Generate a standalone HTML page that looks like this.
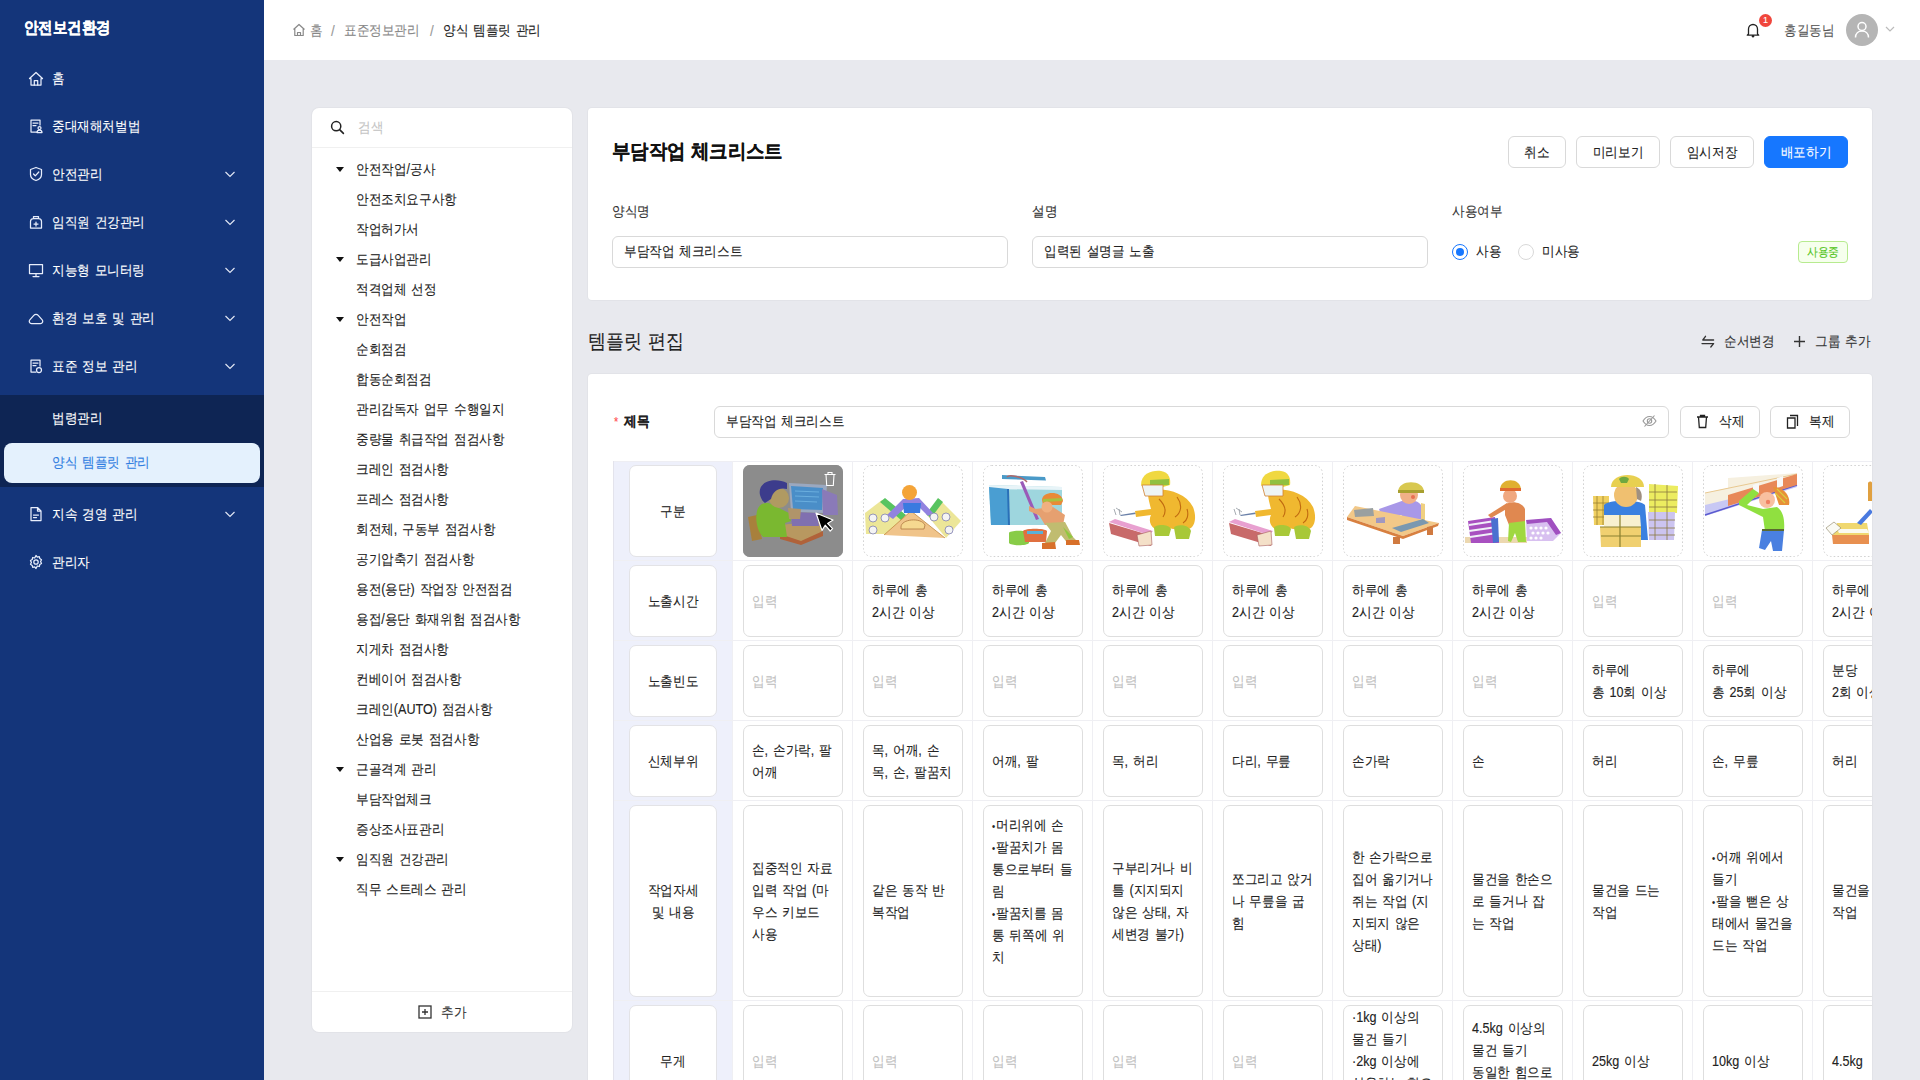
<!DOCTYPE html><html lang="ko"><head><meta charset="utf-8"><title>양식 템플릿 관리</title><style>
*{box-sizing:border-box;margin:0;padding:0}
html,body{width:1920px;height:1080px;overflow:hidden}
body{position:relative;background:#e8e9ee;font-family:"Liberation Sans",sans-serif;color:#222;font-size:14px;letter-spacing:0;word-spacing:1.5px;-webkit-text-stroke:0.12px currentColor}
.abs{position:absolute}
.t{position:absolute;white-space:nowrap;line-height:20px;transform:scaleX(0.9);transform-origin:0 50%}
#sb{position:absolute;left:0;top:0;width:264px;height:1080px;background:#14357a}
.mi{position:absolute;left:0;width:264px;height:48px;color:#fff;font-size:14px}
.mi .ic{position:absolute;left:28px;top:16px;width:16px;height:16px}
.mi .lb{position:absolute;left:52px;top:14px;line-height:20px;white-space:nowrap;transform:scaleX(0.9);transform-origin:0 50%}
.mi .ch{position:absolute;left:224px;top:19px;width:12px;height:10px}
#hd{position:absolute;left:264px;top:0;width:1656px;height:60px;background:#fff}
.panel{position:absolute;background:#fff;border-radius:4px;box-shadow:0 0 0 1px #e2e3e8}
.tr{position:absolute;left:356px;height:20px;line-height:20px;white-space:nowrap;color:#222;font-size:14px;transform:scaleX(0.9);transform-origin:0 50%}
.tri{position:absolute;left:336px;width:0;height:0;border-left:4px solid transparent;border-right:4px solid transparent;border-top:5.5px solid #111}
.inp{position:absolute;height:32px;border:1px solid #d9d9d9;border-radius:6px;background:#fff}
.btn{position:absolute;height:32px;border:1px solid #d9d9d9;border-radius:6px;background:#fff;text-align:center;line-height:30px;color:#222}
.lc{position:absolute;background:#fff;border:1px solid #e3e3e6;border-radius:7px;text-align:center;color:#222}
.cc{position:absolute;background:#fff;border:1px solid #dedede;border-radius:7px;color:#222}
.cc .in{position:absolute;left:7.5px;top:50%;transform:translateY(-50%) scaleX(0.9);transform-origin:0 50%;line-height:22px;white-space:nowrap}
.ph{color:#bfbfbf}
.la{letter-spacing:0}
.k{display:inline-block;transform:scaleX(0.9);transform-origin:50% 50%}
.bl{font-size:10px;margin-right:1px;line-height:0}
.bl2{}
.ic{position:absolute;left:9px;}
.img{position:absolute;border:1px dashed #d4d4d4;border-radius:8px;background:#fff;overflow:hidden}
</style></head><body>
<div id="sb">
<div class="t" style="left:24px;top:18px;color:#fff;font-weight:bold;font-size:16px;line-height:20px;-webkit-text-stroke:0.35px #fff">안전보건환경</div>
<div class="mi" style="top:54px"><svg class="ic" viewBox="0 0 16 16"><path d="M1.5 8.5 8 2.5l6.5 6H13V15H3V8.5z" stroke="#e8eefc" stroke-width="1.25" fill="none" stroke-linecap="round" stroke-linejoin="round"/><path d="M6.3 15v-4.5h3.4V15" stroke="#e8eefc" stroke-width="1.25" fill="none" stroke-linecap="round" stroke-linejoin="round"/></svg><div class="lb">홈</div></div>
<div class="mi" style="top:102px"><svg class="ic" viewBox="0 0 16 16"><path d="M9 14H3V2h9v5M5 5h5M5 7.5h3" stroke="#e8eefc" stroke-width="1.25" fill="none" stroke-linecap="round" stroke-linejoin="round"/><circle cx="11.5" cy="10" r="1.5" stroke="#e8eefc" stroke-width="1.25" fill="none" stroke-linecap="round" stroke-linejoin="round"/><path d="M9 14.5c0-1.5 1-2.3 2.5-2.3s2.5.8 2.5 2.3z" stroke="#e8eefc" stroke-width="1.25" fill="none" stroke-linecap="round" stroke-linejoin="round"/></svg><div class="lb">중대재해처벌법</div></div>
<div class="mi" style="top:150px"><svg class="ic" viewBox="0 0 16 16"><path d="M8 1.5 13.5 3.5v5c0 3-2.5 5-5.5 6-3-1-5.5-3-5.5-6v-5z" stroke="#e8eefc" stroke-width="1.25" fill="none" stroke-linecap="round" stroke-linejoin="round"/><path d="M5.5 8l1.8 1.8L10.8 6" stroke="#e8eefc" stroke-width="1.25" fill="none" stroke-linecap="round" stroke-linejoin="round"/></svg><div class="lb">안전관리</div><svg class="ch" viewBox="0 0 12 10"><path d="M1.5 3l4.5 4.5L10.5 3" stroke="#dfe5f3" stroke-width="1.2" fill="none"/></svg></div>
<div class="mi" style="top:198px"><svg class="ic" viewBox="0 0 16 16"><path d="M5.5 4.5V2.5h5v2M2.5 14V7.5c0-1.7 1.3-3 3-3h5c1.7 0 3 1.3 3 3V14z" stroke="#e8eefc" stroke-width="1.25" fill="none" stroke-linecap="round" stroke-linejoin="round"/><path d="M8 8v4M6 10h4" stroke="#e8eefc" stroke-width="1.25" fill="none" stroke-linecap="round" stroke-linejoin="round"/></svg><div class="lb">임직원 건강관리</div><svg class="ch" viewBox="0 0 12 10"><path d="M1.5 3l4.5 4.5L10.5 3" stroke="#dfe5f3" stroke-width="1.2" fill="none"/></svg></div>
<div class="mi" style="top:246px"><svg class="ic" viewBox="0 0 16 16"><path d="M1.5 2.5h13v9h-13zM8 11.5v2.5M5 14.5h6" stroke="#e8eefc" stroke-width="1.25" fill="none" stroke-linecap="round" stroke-linejoin="round"/></svg><div class="lb">지능형 모니터링</div><svg class="ch" viewBox="0 0 12 10"><path d="M1.5 3l4.5 4.5L10.5 3" stroke="#dfe5f3" stroke-width="1.2" fill="none"/></svg></div>
<div class="mi" style="top:294px"><svg class="ic" viewBox="0 0 16 16"><path d="M3.6 13.6H12.4A2.3 2.3 0 0 0 14.2 9.8L10.2 5.4A3 3 0 0 0 5.8 5.4L1.8 9.8A2.3 2.3 0 0 0 3.6 13.6z" stroke="#e8eefc" stroke-width="1.25" fill="none" stroke-linecap="round" stroke-linejoin="round"/></svg><div class="lb">환경 보호 및 관리</div><svg class="ch" viewBox="0 0 12 10"><path d="M1.5 3l4.5 4.5L10.5 3" stroke="#dfe5f3" stroke-width="1.2" fill="none"/></svg></div>
<div class="mi" style="top:342px"><svg class="ic" viewBox="0 0 16 16"><path d="M8 14H3V2h9v6M5 5h5M5 7.5h3" stroke="#e8eefc" stroke-width="1.25" fill="none" stroke-linecap="round" stroke-linejoin="round"/><circle cx="11" cy="12" r="2.5" stroke="#e8eefc" stroke-width="1.25" fill="none" stroke-linecap="round" stroke-linejoin="round"/></svg><div class="lb">표준 정보 관리</div><svg class="ch" viewBox="0 0 12 10"><path d="M1.5 3l4.5 4.5L10.5 3" stroke="#dfe5f3" stroke-width="1.2" fill="none"/></svg></div>
<div class="abs" style="left:0;top:395px;width:264px;height:92px;background:#0e2554"></div>
<div class="t" style="left:52px;top:408px;color:#fff;font-size:14px">법령관리</div>
<div class="abs" style="left:4px;top:443px;width:256px;height:40px;background:#e4f1fd;border-radius:8px"></div>
<div class="t" style="left:52px;top:452px;color:#2f7de1;font-size:14px">양식 템플릿 관리</div>
<div class="mi" style="top:490px"><svg class="ic" viewBox="0 0 16 16"><path d="M3 1.5h6.5L13 5v9.5H3zM9.5 1.5V5H13M5.5 9h5M5.5 11.5h3" stroke="#e8eefc" stroke-width="1.25" fill="none" stroke-linecap="round" stroke-linejoin="round"/></svg><div class="lb">지속 경영 관리</div><svg class="ch" viewBox="0 0 12 10"><path d="M1.5 3l4.5 4.5L10.5 3" stroke="#dfe5f3" stroke-width="1.2" fill="none"/></svg></div>
<div class="mi" style="top:538px"><svg class="ic" viewBox="0 0 16 16"><circle cx="8" cy="8" r="2.2" stroke="#e8eefc" stroke-width="1.25" fill="none" stroke-linecap="round" stroke-linejoin="round"/><path d="M8 1.5l1.3 1.6 2-.5.5 2 1.7 1.1-.9 1.8.9 1.9-1.7 1.1-.5 2-2-.5L8 14.5l-1.3-1.6-2 .5-.5-2-1.7-1.1.9-1.9-.9-1.8 1.7-1.1.5-2 2 .5z" stroke="#e8eefc" stroke-width="1.25" fill="none" stroke-linecap="round" stroke-linejoin="round"/></svg><div class="lb">관리자</div></div>
</div>
<div id="hd"></div>
<svg class="abs" style="left:292px;top:23px" width="14" height="14" viewBox="0 0 14 14"><path d="M1.5 6.5 7 1.5l5.5 5M2.8 5.5V12.5h8.4V5.5M5.5 12.5V9.5h3v3" stroke="#888" stroke-width="1.2" fill="none" stroke-linejoin="round"/></svg>
<div class="t" style="left:310px;top:20px;color:#888">홈</div>
<div class="t" style="left:331px;top:21px;color:#999;font-size:15px">/</div>
<div class="t" style="left:344px;top:20px;color:#888">표준정보관리</div>
<div class="t" style="left:430px;top:21px;color:#999;font-size:15px">/</div>
<div class="t" style="left:443px;top:20px;color:#222">양식 템플릿 관리</div>
<svg class="abs" style="left:1746px;top:22px" width="14" height="16" viewBox="0 0 14 16"><path d="M2.5 12V7a4.5 4.5 0 0 1 9 0v5l1.2 1.2H1.3z" stroke="#222" stroke-width="1.3" fill="none" stroke-linejoin="round"/><circle cx="7" cy="14.3" r="1.2" fill="#222"/></svg>
<div class="abs" style="left:1759px;top:14px;width:13px;height:13px;border-radius:50%;background:#f0463c;color:#fff;font-size:9px;line-height:13px;text-align:center;letter-spacing:0"><span class="la">1</span></div>
<div class="t" style="left:1784px;top:20px;color:#555">홍길동님</div>
<div class="abs" style="left:1846px;top:14px;width:32px;height:32px;border-radius:50%;background:#b5b5b5"></div>
<svg class="abs" style="left:1846px;top:14px" width="32" height="32" viewBox="0 0 32 32"><circle cx="16" cy="12.5" r="4" stroke="#fff" stroke-width="1.5" fill="none"/><path d="M9.5 23.5c0-4 2.8-6.5 6.5-6.5s6.5 2.5 6.5 6.5" stroke="#fff" stroke-width="1.5" fill="none"/></svg>
<svg class="abs" style="left:1885px;top:25px" width="10" height="8" viewBox="0 0 10 8"><path d="M1 2l4 4 4-4" stroke="#bbb" stroke-width="1.2" fill="none"/></svg>
<div class="panel" style="left:312px;top:108px;width:260px;height:924px;border-radius:7px"></div>
<svg class="abs" style="left:330px;top:120px" width="15" height="15" viewBox="0 0 15 15"><circle cx="6.2" cy="6.2" r="4.6" stroke="#222" stroke-width="1.5" fill="none"/><path d="M9.6 9.6l3.8 3.8" stroke="#222" stroke-width="1.6" stroke-linecap="round"/></svg>
<div class="t" style="left:358px;top:117px;color:#c4c4c4">검색</div>
<div class="abs" style="left:312px;top:147px;width:260px;height:1px;background:#f0f0f0"></div>
<div class="tri" style="top:167px"></div>
<div class="tr" style="top:159px">안전작업/공사</div>
<div class="tr" style="top:189px">안전조치요구사항</div>
<div class="tr" style="top:219px">작업허가서</div>
<div class="tri" style="top:257px"></div>
<div class="tr" style="top:249px">도급사업관리</div>
<div class="tr" style="top:279px">적격업체 선정</div>
<div class="tri" style="top:317px"></div>
<div class="tr" style="top:309px">안전작업</div>
<div class="tr" style="top:339px">순회점검</div>
<div class="tr" style="top:369px">합동순회점검</div>
<div class="tr" style="top:399px">관리감독자 업무 수행일지</div>
<div class="tr" style="top:429px">중량물 취급작업 점검사항</div>
<div class="tr" style="top:459px">크레인 점검사항</div>
<div class="tr" style="top:489px">프레스 점검사항</div>
<div class="tr" style="top:519px">회전체, 구동부 점검사항</div>
<div class="tr" style="top:549px">공기압축기 점검사항</div>
<div class="tr" style="top:579px">용전(용단) 작업장 안전점검</div>
<div class="tr" style="top:609px">용접/용단 화재위험 점검사항</div>
<div class="tr" style="top:639px">지게차 점검사항</div>
<div class="tr" style="top:669px">컨베이어 점검사항</div>
<div class="tr" style="top:699px">크레인(<span class="la">AUTO</span>) 점검사항</div>
<div class="tr" style="top:729px">산업용 로봇 점검사항</div>
<div class="tri" style="top:767px"></div>
<div class="tr" style="top:759px">근골격계 관리</div>
<div class="tr" style="top:789px">부담작업체크</div>
<div class="tr" style="top:819px">증상조사표관리</div>
<div class="tri" style="top:857px"></div>
<div class="tr" style="top:849px">임직원 건강관리</div>
<div class="tr" style="top:879px">직무 스트레스 관리</div>
<div class="abs" style="left:312px;top:991px;width:260px;height:1px;background:#f0f0f0"></div>
<svg class="abs" style="left:418px;top:1005px" width="14" height="14" viewBox="0 0 14 14"><rect x="1" y="1" width="12" height="12" stroke="#333" stroke-width="1.3" fill="none"/><path d="M7 4v6M4 7h6" stroke="#333" stroke-width="1.3"/></svg>
<div class="t" style="left:441px;top:1002px;color:#333">추가</div>
<div class="panel" style="left:588px;top:108px;width:1284px;height:192px"></div>
<div class="t" style="left:612px;top:139px;font-size:20px;font-weight:bold;line-height:24px;color:#111;word-spacing:0;transform:scaleX(.92)">부담작업 체크리스트</div>
<div class="btn" style="left:1508px;top:136px;width:58px;"><span class="k">취소</span></div>
<div class="btn" style="left:1576px;top:136px;width:84px;"><span class="k">미리보기</span></div>
<div class="btn" style="left:1670px;top:136px;width:84px;"><span class="k">임시저장</span></div>
<div class="btn" style="left:1764px;top:136px;width:84px;background:#1677ff;border-color:#1677ff;color:#fff"><span class="k">배포하기</span></div>
<div class="t" style="left:612px;top:201px;color:#333">양식명</div>
<div class="t" style="left:1032px;top:201px;color:#333">설명</div>
<div class="t" style="left:1452px;top:201px;color:#333">사용여부</div>
<div class="inp" style="left:612px;top:236px;width:396px"></div>
<div class="t" style="left:624px;top:241px;color:#222">부담작업 체크리스트</div>
<div class="inp" style="left:1032px;top:236px;width:396px"></div>
<div class="t" style="left:1044px;top:241px;color:#222">입력된 설명글 노출</div>
<div class="abs" style="left:1452px;top:244px;width:16px;height:16px;border-radius:50%;border:1px solid #1677ff;background:#fff"></div>
<div class="abs" style="left:1456px;top:248px;width:8px;height:8px;border-radius:50%;background:#1677ff"></div>
<div class="t" style="left:1476px;top:241px;color:#222">사용</div>
<div class="abs" style="left:1518px;top:244px;width:16px;height:16px;border-radius:50%;border:1px solid #d9d9d9;background:#fff"></div>
<div class="t" style="left:1542px;top:241px;color:#222">미사용</div>
<div class="abs" style="left:1798px;top:241px;width:50px;height:22px;border:1px solid #b7eb8f;background:#f6ffed;border-radius:4px;color:#52c41a;font-size:12px;line-height:20px;text-align:center"><span class="k">사용중</span></div>
<div class="t" style="left:588px;top:329px;font-size:20px;line-height:24px;color:#222;word-spacing:1.5px">템플릿 편집</div>
<svg class="abs" style="left:1700px;top:335px" width="15" height="13" viewBox="0 0 15 13"><path d="M2.8 5H13.6M2.8 5L5.5 1.3M2 8.6H13.6M13.6 8.6L10.8 12" stroke="#333" stroke-width="1.3" fill="none" stroke-linecap="round"/></svg>
<div class="t" style="left:1724px;top:331px;color:#333">순서변경</div>
<svg class="abs" style="left:1793px;top:335px" width="13" height="13" viewBox="0 0 13 13"><path d="M6.5 1v11M1 6.5h11" stroke="#333" stroke-width="1.4"/></svg>
<div class="t" style="left:1815px;top:331px;color:#333">그룹 추가</div>
<div class="panel" style="left:588px;top:374px;width:1284px;height:720px;overflow:hidden" id="bc"></div>
<div class="t" style="left:614px;top:412px;color:#ff4d4f;font-size:12px;letter-spacing:0">*</div>
<div class="t" style="left:624px;top:411px;color:#222;font-weight:bold">제목</div>
<div class="inp" style="left:714px;top:406px;width:955px"></div>
<div class="t" style="left:726px;top:411px;color:#222">부담작업 체크리스트</div>
<svg class="abs" style="left:1642px;top:414px" width="15" height="14" viewBox="0 0 15 14"><path d="M1 7c1.8-3 4-4.5 6.5-4.5S12.2 4 14 7c-1.8 3-4 4.5-6.5 4.5S2.8 10 1 7z" stroke="#999" stroke-width="1.1" fill="none"/><circle cx="7.5" cy="7" r="2.2" stroke="#999" stroke-width="1.1" fill="none"/><path d="M2.5 12.5 12.5 1.5" stroke="#999" stroke-width="1.1"/></svg>
<div class="btn" style="left:1680px;top:406px;width:80px"></div>
<svg class="abs" style="left:1696px;top:414px" width="13" height="15" viewBox="0 0 13 15"><path d="M1 3h11M4.5 3V1.5h4V3M2.5 3l.8 10.5h6.4L10.5 3" stroke="#222" stroke-width="1.3" fill="none"/></svg>
<div class="t" style="left:1719px;top:411px;color:#222">삭제</div>
<div class="btn" style="left:1770px;top:406px;width:80px"></div>
<svg class="abs" style="left:1786px;top:414px" width="13" height="15" viewBox="0 0 13 15"><path d="M4 1.5h7.5v10.5M1.5 4h7.5v10H1.5z" stroke="#222" stroke-width="1.3" fill="none"/></svg>
<div class="t" style="left:1809px;top:411px;color:#222">복제</div>
<div class="abs" style="left:613px;top:461px;width:1259px;height:619px;overflow:hidden;background:#fff">
<div class="abs" style="left:0;top:0;width:119px;height:700px;background:#eef0fb"></div>
<div class="abs" style="left:0;top:0;width:1400px;height:1px;background:#eeeef3"></div>
<div class="abs" style="left:0;top:99px;width:1400px;height:1px;background:#efeff3"></div>
<div class="abs" style="left:0;top:179px;width:1400px;height:1px;background:#efeff3"></div>
<div class="abs" style="left:0;top:259px;width:1400px;height:1px;background:#efeff3"></div>
<div class="abs" style="left:0;top:339px;width:1400px;height:1px;background:#efeff3"></div>
<div class="abs" style="left:0;top:539px;width:1400px;height:1px;background:#efeff3"></div>
<div class="abs" style="left:0;top:659px;width:1400px;height:1px;background:#efeff3"></div>
<div class="abs" style="left:0;top:0;width:1px;height:700px;background:#e3e3ec"></div>
<div class="abs" style="left:119px;top:0;width:1px;height:700px;background:#efeff3"></div>
<div class="abs" style="left:239px;top:0;width:1px;height:700px;background:#efeff3"></div>
<div class="abs" style="left:359px;top:0;width:1px;height:700px;background:#efeff3"></div>
<div class="abs" style="left:479px;top:0;width:1px;height:700px;background:#efeff3"></div>
<div class="abs" style="left:599px;top:0;width:1px;height:700px;background:#efeff3"></div>
<div class="abs" style="left:719px;top:0;width:1px;height:700px;background:#efeff3"></div>
<div class="abs" style="left:839px;top:0;width:1px;height:700px;background:#efeff3"></div>
<div class="abs" style="left:959px;top:0;width:1px;height:700px;background:#efeff3"></div>
<div class="abs" style="left:1079px;top:0;width:1px;height:700px;background:#efeff3"></div>
<div class="abs" style="left:1199px;top:0;width:1px;height:700px;background:#efeff3"></div>
<div class="abs" style="left:1319px;top:0;width:1px;height:700px;background:#efeff3"></div>
<div class="lc" style="left:16px;top:4px;width:88px;height:92px"><div style="position:absolute;left:0;right:0;top:50%;transform:translateY(-50%) scaleX(.9);line-height:22px">구분</div></div>
<div class="lc" style="left:16px;top:104px;width:88px;height:72px"><div style="position:absolute;left:0;right:0;top:50%;transform:translateY(-50%) scaleX(.9);line-height:22px">노출시간</div></div>
<div class="lc" style="left:16px;top:184px;width:88px;height:72px"><div style="position:absolute;left:0;right:0;top:50%;transform:translateY(-50%) scaleX(.9);line-height:22px">노출빈도</div></div>
<div class="lc" style="left:16px;top:264px;width:88px;height:72px"><div style="position:absolute;left:0;right:0;top:50%;transform:translateY(-50%) scaleX(.9);line-height:22px">신체부위</div></div>
<div class="lc" style="left:16px;top:344px;width:88px;height:192px"><div style="position:absolute;left:0;right:0;top:50%;transform:translateY(-50%) scaleX(.9);line-height:22px">작업자세<br>및 내용</div></div>
<div class="lc" style="left:16px;top:544px;width:88px;height:112px"><div style="position:absolute;left:0;right:0;top:50%;transform:translateY(-50%) scaleX(.9);line-height:22px">무게</div></div>
<div class="abs" style="left:130px;top:4px;width:100px;height:92px;border-radius:7px;overflow:hidden;background:#999"><svg width="100" height="92" viewBox="0 0 100 92" style="position:absolute;left:0;top:0">
<rect x="0" y="0" width="100" height="92" fill="#8c8c8c"/>
<path d="M5 52 L14 50 L19 74 L9 76z" fill="#a8803c"/>
<path d="M36 60 L80 56 L78 68 L58 77 L37 72z" fill="#b89860"/>
<path d="M37 69 L58 76 L80 66 L80 71 L58 80 L37 74z" fill="#b0623a"/>
<path d="M46 18 L84 20 L82 48 L48 47z" fill="#9aa8c0"/>
<path d="M48 21 L80 23 L79 45 L50 44z" fill="#4a8ec8"/>
<path d="M52 26 L76 27 M52 31 L76 32 M52 36 L74 37" stroke="#6aaede" stroke-width="1"/>
<path d="M79 24 L94 30 L95 50 L80 50z" fill="#8a7ab8"/>
<path d="M48 47 L74 48 L76 61 L49 61z" fill="#8070b0"/>
<path d="M14 46 C16 38 24 36 30 40 L46 48 L48 56 L42 58 L44 72 L20 72 C14 66 12 54 14 46z" fill="#7ab830"/>
<path d="M45 43 L58 44 L57 54 L46 54z" fill="#b0946a"/>
<ellipse cx="36" cy="33" rx="10" ry="10" fill="#b09a62"/>
<path d="M17 30 C14 16 32 12 44 18 L44 24 C36 22 30 26 28 34 L22 38 C19 36 18 33 17 30z" fill="#3c3c8c"/>
</svg><svg class="abs" style="left:80px;top:6px" width="14" height="16" viewBox="0 0 14 16"><path d="M1.5 3.5h11M5 3.5V1.5h4v2M3 3.5l.7 11h6.6l.7-11" stroke="#fff" stroke-width="1.1" fill="none"/></svg><svg class="abs" style="left:71px;top:46px" width="22" height="22" viewBox="0 0 22 22"><path d="M2 2 L8 19.4 L11.2 14.2 L16.2 20 L18.6 17.6 L13.6 12.4 L19 9z" fill="#000" stroke="#fff" stroke-width="1.2" stroke-linejoin="round"/></svg></div>
<div class="abs" style="left:250px;top:4px;width:100px;height:92px"><svg width="100" height="92" viewBox="0 0 100 92" style="position:absolute;left:0;top:0">
<path d="M2 48 L19 35 L42 53 L23 69 L3 69z" fill="#ece698"/>
<path d="M64 50 L76 34 L98 56 L83 73z" fill="#ece698"/>
<path d="M17 37 L22 33 L43 50 L38 55z" fill="#58c460"/>
<path d="M63 49 L75 33 L80 37 L68 53z" fill="#58c460"/>
<path d="M21 70 L48 46 L82 73z" fill="#f0c48a"/>
<path d="M21 70 L48 46 L82 73" fill="none" stroke="#c08840" stroke-width="0.8"/>
<path d="M38 62 C38 54 58 52 62 60 L61 64 L38 64z" fill="#f6d890" stroke="#b07840" stroke-width="0.8"/>
<path d="M24 50 L40 34 L56 33 L70 48 L65 51 L55 41 L44 41 L30 54z" fill="#9282e0"/>
<path d="M40 38 L58 38 L57 48 L41 48z" fill="#3a7ae0"/>
<circle cx="46.5" cy="27.5" r="7.5" fill="#f4a438"/>
<g fill="#f4f4f4" stroke="#7070a8" stroke-width="0.7"><circle cx="10" cy="53" r="4"/><circle cx="22" cy="53" r="4"/><circle cx="10" cy="65" r="4"/><circle cx="71" cy="52" r="4"/><circle cx="83" cy="52" r="4"/><circle cx="86" cy="65" r="4"/></g>
</svg><svg class="abs" style="left:0;top:0" width="100" height="92"><rect x="0.5" y="0.5" width="99" height="91" rx="8" fill="none" stroke="#d2d2d2" stroke-width="1" stroke-dasharray="1.6 2.2"/></svg></div>
<div class="abs" style="left:370px;top:4px;width:100px;height:92px"><svg width="100" height="92" viewBox="0 0 100 92" style="position:absolute;left:0;top:0">
<path d="M6 20 L79 22 L79 60 L8 60z" fill="#9ed6de"/>
<path d="M6 20 L79 22 L79 25 L6 24z" fill="#e8f4f8"/>
<path d="M6 22 L25 24 L26 60 L8 60z" fill="#4a9ed2"/>
<path d="M24 24 L26 24 L27 60 L25 60z" fill="#2a70b8"/>
<path d="M19 10 L62 12 L63 15.5 L19 14z" fill="#4a9ac8"/>
<path d="M24 12 C26 9 40 12 44 17" stroke="#b06868" stroke-width="1.5" fill="none"/>
<path d="M37 17 L40 16 L56 54 L53 55z" fill="#9a5ab8"/>
<path d="M26 68 C26 65 46 65 46 68 L46 78 C44 81 28 81 26 78z" fill="#88cc48"/>
<path d="M40 66 C42 63 62 63 64 66 L63 77 L42 77z" fill="#e07040"/>
<path d="M44 66 L60 66 L60 69 L44 69z" fill="#5ab0d8"/>
<path d="M52 44 L70 42 L82 50 L80 60 L62 60 L56 50z" fill="#e6a070"/>
<path d="M46 41 L62 48 L60 52 L46 46z" fill="#e6a070"/>
<path d="M62 58 L82 57 L90 72 L96 78 L86 80 L78 70 L72 78 L62 78 L68 66z" fill="#c0bc70"/>
<path d="M80 62 L90 72 L86 74z" fill="#90c840"/>
<path d="M59 78 L72 77 L73 84 L59 84z M83 75 L96 75 L97 80 L83 80z" fill="#d8702a"/>
<path d="M59 35 C59 26 79 25 80 36 L78 40 L60 40z" fill="#e88a38"/>
<path d="M60 34 L79 33 L79 36 L60 37z" fill="#a8c040"/>
<circle cx="64" cy="42" r="5.5" fill="#f0b080"/>
</svg><svg class="abs" style="left:0;top:0" width="100" height="92"><rect x="0.5" y="0.5" width="99" height="91" rx="8" fill="none" stroke="#d2d2d2" stroke-width="1" stroke-dasharray="1.6 2.2"/></svg></div>
<div class="abs" style="left:490px;top:4px;width:100px;height:92px"><svg width="100" height="92" viewBox="0 0 100 92" style="position:absolute;left:0;top:0">
<path d="M6 58 L46 70 L48 81 L8 69z" fill="#c86a6a"/>
<path d="M6 57 L12 54 L50 66 L46 70z" fill="#e8a0d0"/>
<path d="M34 70 L48 66 L49 80 L36 81z" fill="#f4e0c8" stroke="#a86060" stroke-width="0.6"/>
<path d="M17 50 L32 47.5 L33 49 L18 51z" fill="#6a80a8"/>
<path d="M11 44 L13 50 M16 44 L17 50 M13 43 L19 47" stroke="#9098a0" stroke-width="0.8"/>
<path d="M46 26 C58 22 82 26 90 42 C94 52 92 62 86 64 L70 64 L62 62 L52 64 C46 60 46 54 48 50 L33 52 L32 46 L48 44 C46 36 44 30 46 26z" fill="#f0b830"/>
<path d="M56 34 C62 40 64 46 60 52 M74 32 C80 40 78 48 72 52 M84 44 C86 50 84 56 80 58" stroke="#c06a10" stroke-width="1.1" fill="none"/>
<path d="M51 63 C52 59 66 59 68 64 L66 71 L52 71z M71 63 C72 59 86 59 88 66 L86 74 L73 74z" fill="#a8c838"/>
<path d="M38 20 C38 8 50 5 58 6 C66 7 68 14 67 20 L60 22 L40 22z" fill="#f0d840"/>
<path d="M47 15 L66 14 L66 20 L47 21z" fill="#90c040"/>
<path d="M39 20 L60 20 L60 31 L42 31z" fill="#eef4f4" stroke="#d08030" stroke-width="0.8"/>
</svg><svg class="abs" style="left:0;top:0" width="100" height="92"><rect x="0.5" y="0.5" width="99" height="91" rx="8" fill="none" stroke="#d2d2d2" stroke-width="1" stroke-dasharray="1.6 2.2"/></svg></div>
<div class="abs" style="left:610px;top:4px;width:100px;height:92px"><svg width="100" height="92" viewBox="0 0 100 92" style="position:absolute;left:0;top:0">
<path d="M6 58 L46 70 L48 81 L8 69z" fill="#c86a6a"/>
<path d="M6 57 L12 54 L50 66 L46 70z" fill="#e8a0d0"/>
<path d="M34 70 L48 66 L49 80 L36 81z" fill="#f4e0c8" stroke="#a86060" stroke-width="0.6"/>
<path d="M17 50 L32 47.5 L33 49 L18 51z" fill="#6a80a8"/>
<path d="M11 44 L13 50 M16 44 L17 50 M13 43 L19 47" stroke="#9098a0" stroke-width="0.8"/>
<path d="M46 26 C58 22 82 26 90 42 C94 52 92 62 86 64 L70 64 L62 62 L52 64 C46 60 46 54 48 50 L33 52 L32 46 L48 44 C46 36 44 30 46 26z" fill="#f0b830"/>
<path d="M56 34 C62 40 64 46 60 52 M74 32 C80 40 78 48 72 52 M84 44 C86 50 84 56 80 58" stroke="#c06a10" stroke-width="1.1" fill="none"/>
<path d="M51 63 C52 59 66 59 68 64 L66 71 L52 71z M71 63 C72 59 86 59 88 66 L86 74 L73 74z" fill="#a8c838"/>
<path d="M38 20 C38 8 50 5 58 6 C66 7 68 14 67 20 L60 22 L40 22z" fill="#f0d840"/>
<path d="M47 15 L66 14 L66 20 L47 21z" fill="#90c040"/>
<path d="M39 20 L60 20 L60 31 L42 31z" fill="#eef4f4" stroke="#d08030" stroke-width="0.8"/>
</svg><svg class="abs" style="left:0;top:0" width="100" height="92"><rect x="0.5" y="0.5" width="99" height="91" rx="8" fill="none" stroke="#d2d2d2" stroke-width="1" stroke-dasharray="1.6 2.2"/></svg></div>
<div class="abs" style="left:730px;top:4px;width:100px;height:92px"><svg width="100" height="92" viewBox="0 0 100 92" style="position:absolute;left:0;top:0">
<path d="M78 38 L82 39 L82 56 L78 56z" fill="#f0d080"/>
<path d="M36 44 L56 37 C62 34 74 34 78 40 L78 54 L64 55 L58 50 L38 50z" fill="#a898e8"/>
<circle cx="66" cy="30" r="9" fill="#f0b088"/>
<circle cx="70" cy="32" r="2" fill="#e87050"/>
<path d="M55 27 C55 14 81 14 81 27z" fill="#d8c850"/>
<path d="M55 25 L81 25 L81 28 L55 28z" fill="#a8a030"/>
<path d="M4 52 L12 41 L96 58 L60 71z" fill="#f2c888"/>
<path d="M4 52 L60 71 L60 74 L4 55z M60 71 L96 58 L95 61 L60 74z" fill="#d88040"/>
<path d="M50 72 L57 72 L57 79 L50 79z M84 62 L90 61 L90 70 L84 70z" fill="#d07a40"/>
<path d="M49 63 L80 54 L86 58 L58 67z" fill="#7a98b0"/>
<path d="M11 45 L30 43 L31 51 L12 52z" fill="#9aa0a0"/>
<path d="M33 53 L42 52 L42 58 L33 58z" fill="#a098c0"/>
</svg><svg class="abs" style="left:0;top:0" width="100" height="92"><rect x="0.5" y="0.5" width="99" height="91" rx="8" fill="none" stroke="#d2d2d2" stroke-width="1" stroke-dasharray="1.6 2.2"/></svg></div>
<div class="abs" style="left:850px;top:4px;width:100px;height:92px"><svg width="100" height="92" viewBox="0 0 100 92" style="position:absolute;left:0;top:0">
<path d="M2 72 L64 72 L64 78 L2 78z" fill="#ecd8b0"/>
<path d="M5 56 L32 52 L36 78 L8 78z" fill="#a850c0"/>
<path d="M6 60 L32 56 M6 66 L34 62 M7 72 L34 68" stroke="#f0f0f8" stroke-width="2"/>
<path d="M28 54 L35 53 L36 77 L30 78z" fill="#4a70d0"/>
<path d="M63 56 L88 53 L98 68 L90 76 L64 76z" fill="#d8c0f0"/>
<path d="M63 55 L88 53 L98 68 L93 70 L84 57 L64 59z" fill="#a050c0"/>
<g fill="#fff"><circle cx="68" cy="63" r="1.6"/><circle cx="73" cy="63" r="1.6"/><circle cx="78" cy="63" r="1.6"/><circle cx="83" cy="63" r="1.6"/><circle cx="70" cy="68" r="1.6"/><circle cx="75" cy="68" r="1.6"/><circle cx="80" cy="68" r="1.6"/><circle cx="85" cy="68" r="1.6"/><circle cx="68" cy="73" r="1.6"/><circle cx="73" cy="73" r="1.6"/><circle cx="78" cy="73" r="1.6"/></g>
<path d="M42 40 C46 36 58 36 62 44 L62 58 L46 60 L42 50z" fill="#e08850"/>
<path d="M25 50 L44 38 L47 42 L28 53z" fill="#e08850"/>
<path d="M46 58 L62 56 L63 77 L55 77 L52 68 L48 77 L45 76z" fill="#a0d840"/>
<circle cx="47" cy="31" r="7" fill="#f0a880"/>
<path d="M37 25 C37 12 58 12 58 25z" fill="#e0b030"/>
<path d="M37 23 L58 23 L58 26 L37 26z" fill="#e06a30"/>
</svg><svg class="abs" style="left:0;top:0" width="100" height="92"><rect x="0.5" y="0.5" width="99" height="91" rx="8" fill="none" stroke="#d2d2d2" stroke-width="1" stroke-dasharray="1.6 2.2"/></svg></div>
<div class="abs" style="left:970px;top:4px;width:100px;height:92px"><svg width="100" height="92" viewBox="0 0 100 92" style="position:absolute;left:0;top:0">
<path d="M10 31 L26 31 L26 60 L11 60z" fill="#f0d060"/>
<path d="M14 31 V60 M20 31 V60 M10 38 H26 M10 45 H26 M10 52 H26" stroke="#9a8030" stroke-width="0.8"/>
<path d="M66 19 L95 21 L94 48 L66 47z" fill="#ecec60"/>
<path d="M65 47 L92 47 L91 75 L66 75z" fill="#ccc4f0"/>
<path d="M72 19 V75 M84 20 V75 M66 27 H94 M66 35 H94 M66 42 H94 M66 55 H92 M66 63 H92 M66 70 H92" stroke="#8a7a40" stroke-width="0.8"/>
<path d="M21 40 C24 35 56 34 62 40 L65 75 L21 75z" fill="#3a80e0"/>
<circle cx="43" cy="30" r="12" fill="#f0c070"/>
<path d="M53 22 C58 24 60 30 58 36 L54 34z" fill="#a09080"/>
<path d="M28 22 C28 6 61 6 61 22z" fill="#e8d050"/>
<path d="M36 14 C38 11 44 11 46 14 L44 18 L38 18z" fill="#70a840"/>
<path d="M21 50 L57 50 L58 62 L21 62z" fill="#f8f0d0"/>
<path d="M17 62 L58 62 L58 82 L18 82z" fill="#f0d070"/>
<path d="M37 50 V82 M18 71 H58 M17 62 H58" stroke="#8a8030" stroke-width="1.2"/>
</svg><svg class="abs" style="left:0;top:0" width="100" height="92"><rect x="0.5" y="0.5" width="99" height="91" rx="8" fill="none" stroke="#d2d2d2" stroke-width="1" stroke-dasharray="1.6 2.2"/></svg></div>
<div class="abs" style="left:1090px;top:4px;width:100px;height:92px"><svg width="100" height="92" viewBox="0 0 100 92" style="position:absolute;left:0;top:0">
<path d="M2 28 L25 23 L25 13 L94 8 L94 20 L2 51z" fill="#f6f0e0"/>
<path d="M2 28 L94 9" stroke="#e8c890" stroke-width="1"/>
<path d="M2 40 L94 18 L94 22 L2 51z" fill="#c8c8f4"/>
<path d="M2 50 L94 20" stroke="#5a5ad0" stroke-width="1.5"/>
<path d="M25 30 L94 9 L94 20 L25 41z" fill="#e88858"/>
<path d="M50 20 L56 18 L56 28 L50 30z M74 13 L80 11 L80 21 L74 23z" fill="#f8f8f8"/>
<path d="M36 36 L50 24 L56 28 L44 40 L60 44 L74 42 C80 46 82 54 81 66 L62 66 L60 52 L36 40z" fill="#90e040"/>
<path d="M59 65 L81 65 L79 86 L70 86 L68 76 L62 85 L56 83z" fill="#4a80e0"/>
<path d="M59 64 L81 64 L81 66 L59 66z" fill="#5a6a30"/>
<circle cx="64" cy="35" r="8" fill="#f8c0a0"/>
<circle cx="65" cy="37" r="2.2" fill="#f08060"/>
<path d="M70 22 C80 22 88 30 86 40 L76 40 C74 34 72 28 70 22z" fill="#e89038"/>
<path d="M74 24 L84 34 M72 28 L82 38" stroke="#d8d040" stroke-width="1.2"/>
</svg><svg class="abs" style="left:0;top:0" width="100" height="92"><rect x="0.5" y="0.5" width="99" height="91" rx="8" fill="none" stroke="#d2d2d2" stroke-width="1" stroke-dasharray="1.6 2.2"/></svg></div>
<div class="abs" style="left:1210px;top:4px;width:100px;height:92px"><svg width="100" height="92" viewBox="0 0 100 92" style="position:absolute;left:0;top:0">
<path d="M9 70 L46 70 L46 79 L10 79z" fill="#e89050"/>
<path d="M14 58 L44 58 L46 70 L10 70z" fill="#f0d870"/>
<path d="M14 64 L44 64 L46 68 L16 68z" fill="#fafaf0"/>
<path d="M3 63 L11 57 L18 63 L9 70z" fill="#fafaf4" stroke="#8a8060" stroke-width="0.6"/>
<path d="M34 58 L47 44 L50 47 L38 60z" fill="#4a7ae0"/>
<path d="M45 18 C46 16 49 16 49 18 L49 36 L45 36z" fill="#e0a040"/>
</svg><svg class="abs" style="left:0;top:0" width="100" height="92"><rect x="0.5" y="0.5" width="99" height="91" rx="8" fill="none" stroke="#d2d2d2" stroke-width="1" stroke-dasharray="1.6 2.2"/></svg></div>
<div class="cc" style="left:130px;top:104px;width:100px;height:72px"><div class="in" style=""><span class="ph">입력</span></div></div>
<div class="cc" style="left:250px;top:104px;width:100px;height:72px"><div class="in" style="">하루에 총<br><span class="la">2</span>시간 이상</div></div>
<div class="cc" style="left:370px;top:104px;width:100px;height:72px"><div class="in" style="">하루에 총<br><span class="la">2</span>시간 이상</div></div>
<div class="cc" style="left:490px;top:104px;width:100px;height:72px"><div class="in" style="">하루에 총<br><span class="la">2</span>시간 이상</div></div>
<div class="cc" style="left:610px;top:104px;width:100px;height:72px"><div class="in" style="">하루에 총<br><span class="la">2</span>시간 이상</div></div>
<div class="cc" style="left:730px;top:104px;width:100px;height:72px"><div class="in" style="">하루에 총<br><span class="la">2</span>시간 이상</div></div>
<div class="cc" style="left:850px;top:104px;width:100px;height:72px"><div class="in" style="">하루에 총<br><span class="la">2</span>시간 이상</div></div>
<div class="cc" style="left:970px;top:104px;width:100px;height:72px"><div class="in" style=""><span class="ph">입력</span></div></div>
<div class="cc" style="left:1090px;top:104px;width:100px;height:72px"><div class="in" style=""><span class="ph">입력</span></div></div>
<div class="cc" style="left:1210px;top:104px;width:100px;height:72px"><div class="in" style="">하루에 총<br><span class="la">2</span>시간 이상</div></div>
<div class="cc" style="left:130px;top:184px;width:100px;height:72px"><div class="in" style=""><span class="ph">입력</span></div></div>
<div class="cc" style="left:250px;top:184px;width:100px;height:72px"><div class="in" style=""><span class="ph">입력</span></div></div>
<div class="cc" style="left:370px;top:184px;width:100px;height:72px"><div class="in" style=""><span class="ph">입력</span></div></div>
<div class="cc" style="left:490px;top:184px;width:100px;height:72px"><div class="in" style=""><span class="ph">입력</span></div></div>
<div class="cc" style="left:610px;top:184px;width:100px;height:72px"><div class="in" style=""><span class="ph">입력</span></div></div>
<div class="cc" style="left:730px;top:184px;width:100px;height:72px"><div class="in" style=""><span class="ph">입력</span></div></div>
<div class="cc" style="left:850px;top:184px;width:100px;height:72px"><div class="in" style=""><span class="ph">입력</span></div></div>
<div class="cc" style="left:970px;top:184px;width:100px;height:72px"><div class="in" style="">하루에<br>총 <span class="la">10</span>회 이상</div></div>
<div class="cc" style="left:1090px;top:184px;width:100px;height:72px"><div class="in" style="">하루에<br>총 <span class="la">25</span>회 이상</div></div>
<div class="cc" style="left:1210px;top:184px;width:100px;height:72px"><div class="in" style="">분당<br><span class="la">2</span>회 이상</div></div>
<div class="cc" style="left:130px;top:264px;width:100px;height:72px"><div class="in" style="">손, 손가락, 팔<br>어깨</div></div>
<div class="cc" style="left:250px;top:264px;width:100px;height:72px"><div class="in" style="">목, 어깨, 손<br>목, 손, 팔꿈치</div></div>
<div class="cc" style="left:370px;top:264px;width:100px;height:72px"><div class="in" style="">어깨, 팔</div></div>
<div class="cc" style="left:490px;top:264px;width:100px;height:72px"><div class="in" style="">목, 허리</div></div>
<div class="cc" style="left:610px;top:264px;width:100px;height:72px"><div class="in" style="">다리, 무릎</div></div>
<div class="cc" style="left:730px;top:264px;width:100px;height:72px"><div class="in" style="">손가락</div></div>
<div class="cc" style="left:850px;top:264px;width:100px;height:72px"><div class="in" style="">손</div></div>
<div class="cc" style="left:970px;top:264px;width:100px;height:72px"><div class="in" style="">허리</div></div>
<div class="cc" style="left:1090px;top:264px;width:100px;height:72px"><div class="in" style="">손, 무릎</div></div>
<div class="cc" style="left:1210px;top:264px;width:100px;height:72px"><div class="in" style="">허리</div></div>
<div class="cc" style="left:130px;top:344px;width:100px;height:192px"><div class="in" style="">집중적인 자료<br>입력 작업 (마<br>우스 키보드<br>사용</div></div>
<div class="cc" style="left:250px;top:344px;width:100px;height:192px"><div class="in" style="">같은 동작 반<br>복작업</div></div>
<div class="cc" style="left:370px;top:344px;width:100px;height:192px"><div class="in" style="margin-top:-10.5px"><span class="bl">•</span>머리위에 손<br><span class="bl">•</span>팔꿈치가 몸<br>통으로부터 들<br>림<br><span class="bl">•</span>팔꿈치를 몸<br>통 뒤쪽에 위<br>치</div></div>
<div class="cc" style="left:490px;top:344px;width:100px;height:192px"><div class="in" style="">구부리거나 비<br>틀 (지지되지<br>않은 상태, 자<br>세변경 불가)</div></div>
<div class="cc" style="left:610px;top:344px;width:100px;height:192px"><div class="in" style="">쪼그리고 앉거<br>나 무릎을 굽<br>힘</div></div>
<div class="cc" style="left:730px;top:344px;width:100px;height:192px"><div class="in" style="">한 손가락으로<br>집어 옮기거나<br>쥐는 작업 (지<br>지되지 않은<br>상태)</div></div>
<div class="cc" style="left:850px;top:344px;width:100px;height:192px"><div class="in" style="">물건을 한손으<br>로 들거나 잡<br>는 작업</div></div>
<div class="cc" style="left:970px;top:344px;width:100px;height:192px"><div class="in" style="">물건을 드는<br>작업</div></div>
<div class="cc" style="left:1090px;top:344px;width:100px;height:192px"><div class="in" style=""><span class="bl">•</span>어깨 위에서<br>들기<br><span class="bl">•</span>팔을 뻗은 상<br>태에서 물건을<br>드는 작업</div></div>
<div class="cc" style="left:1210px;top:344px;width:100px;height:192px"><div class="in" style="">물건을 드는<br>작업</div></div>
<div class="cc" style="left:130px;top:544px;width:100px;height:112px"><div class="in" style=""><span class="ph">입력</span></div></div>
<div class="cc" style="left:250px;top:544px;width:100px;height:112px"><div class="in" style=""><span class="ph">입력</span></div></div>
<div class="cc" style="left:370px;top:544px;width:100px;height:112px"><div class="in" style=""><span class="ph">입력</span></div></div>
<div class="cc" style="left:490px;top:544px;width:100px;height:112px"><div class="in" style=""><span class="ph">입력</span></div></div>
<div class="cc" style="left:610px;top:544px;width:100px;height:112px"><div class="in" style=""><span class="ph">입력</span></div></div>
<div class="cc" style="left:730px;top:544px;width:100px;height:112px"><div class="in" style=""><span class="bl2">·</span><span class="la">1kg</span> 이상의<br>물건 들기<br><span class="bl2">·</span><span class="la">2kg</span> 이상에<br>상응하는 힘으<br>로 쥐기</div></div>
<div class="cc" style="left:850px;top:544px;width:100px;height:112px"><div class="in" style=""><span class="la">4.5kg</span> 이상의<br>물건 들기<br>동일한 힘으로<br>쥐기</div></div>
<div class="cc" style="left:970px;top:544px;width:100px;height:112px"><div class="in" style=""><span class="la">25kg</span> 이상</div></div>
<div class="cc" style="left:1090px;top:544px;width:100px;height:112px"><div class="in" style=""><span class="la">10kg</span> 이상</div></div>
<div class="cc" style="left:1210px;top:544px;width:100px;height:112px"><div class="in" style=""><span class="la">4.5kg</span></div></div>
</div>
</body></html>
